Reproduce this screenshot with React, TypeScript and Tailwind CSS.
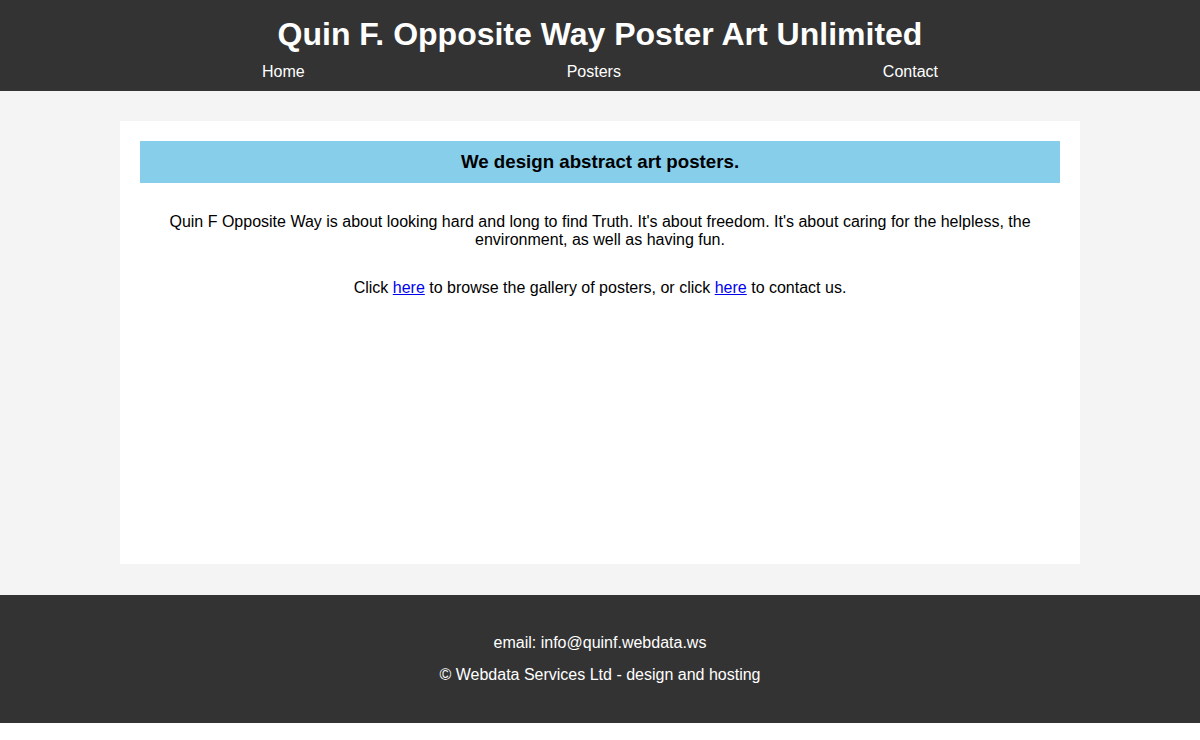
export default function App() {
  return (
    <div className="min-h-[740px] bg-white font-['Liberation_Sans',Arial,sans-serif] text-black">
      <header className="bg-[#333333] pt-[16px] pb-[10px] text-white">
        <h1 className="text-center text-[32px] font-bold leading-[37px]">
          Quin F. Opposite Way Poster Art Unlimited
        </h1>
        <nav className="mx-auto mt-[10px] flex w-[676px] justify-between text-[16px] leading-[18px]">
          <a href="#">Home</a>
          <a href="#">Posters</a>
          <a href="#">Contact</a>
        </nav>
      </header>
      <main className="bg-[#f4f4f4] pt-[30px] pb-[31px]">
        <div className="mx-auto min-h-[443px] w-[960px] bg-white p-[20px]">
          <h2 className="bg-[#87ceeb] py-[10px] text-center text-[18.72px] font-bold leading-[22px]">
            We design abstract art posters.
          </h2>
          <p className="mt-[30px] px-[20px] text-center text-[16px] leading-[18px]">
            Quin F Opposite Way is about looking hard and long to find Truth. It's about freedom. It's about caring for the helpless, the environment, as well as having fun.
          </p>
          <p className="mt-[30px] text-center text-[16px] leading-[18px]">
            Click <a href="#" className="text-[#0000ee] underline">here</a> to browse the gallery of posters, or click{" "}
            <a href="#" className="text-[#0000ee] underline">here</a> to contact us.
          </p>
        </div>
      </main>
      <footer className="flex h-[128px] flex-col items-center bg-[#333333] pt-[39px] text-[16px] leading-[18px] text-white">
        <p>email: info@quinf.webdata.ws</p>
        <p className="mt-[14px]">© Webdata Services Ltd - design and hosting</p>
      </footer>
    </div>
  );
}
